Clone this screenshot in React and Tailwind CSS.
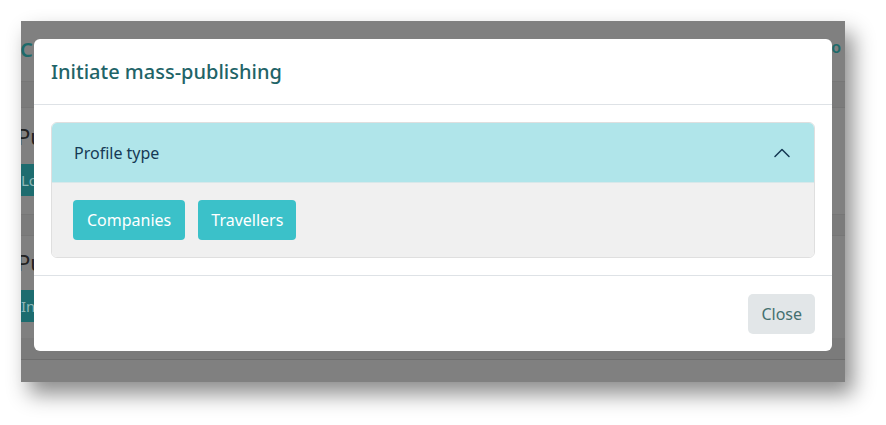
import { ChevronUp } from 'lucide-react'

const FONT = { fontFamily: '"Noto Sans", "Open Sans", sans-serif' }

function BackdropPage() {
  // page content sitting behind the overlay, already dimmed
  return (
    <div className="flex h-full flex-col">
      <div className="flex h-[60px] items-start justify-between pt-[14px] text-[20px] font-semibold text-[#1d6a6a]">
        <span className="-ml-[1px]">C</span>
        <span className="mr-[4px] text-[16px]">o</span>
      </div>
      <div className="h-[27px] border-y border-[#767676] bg-[#7b7b7b]" />
      <div className="flex flex-col gap-[14px] pt-[14px]">
        <span className="-ml-[4px] text-[22px] leading-[28px] text-[#222]">Pu</span>
        <span className="flex h-[32px] w-[20px] items-center bg-[#1d6c6f] text-[15px] text-[#8fb7b8]">Lo</span>
      </div>
      <div className="mt-[18px] h-[22px] border-y border-[#767676] bg-[#7b7b7b]" />
      <div className="flex flex-col gap-[14px] pt-[12px]">
        <span className="-ml-[4px] text-[22px] leading-[28px] text-[#222]">Pu</span>
        <span className="flex h-[32px] w-[20px] items-center bg-[#1d6c6f] text-[15px] text-[#8fb7b8]">In</span>
      </div>
      <div className="mt-[16px] h-[22px] border-b border-[#6e6e6e] bg-[#7b7b7b]" />
    </div>
  )
}

export default function App() {
  return (
    <div className="h-[425px] w-[886px] overflow-hidden bg-white pl-[21px] pt-[21px]" style={FONT}>
      <div className="relative h-[361px] w-[824px] overflow-hidden bg-[#808080] shadow-[8px_12px_20px_rgba(0,0,0,0.45)]">
        <BackdropPage />

        {/* modal */}
        <div className="absolute left-[13px] top-[18px] flex h-[312px] w-[798px] flex-col rounded-[6px] bg-white">
          <div className="flex h-[66px] shrink-0 items-center border-b border-[#dee2e6] px-[17px]">
            <h2 className="text-[20px] font-medium text-[#1f6468]">Initiate mass-publishing</h2>
          </div>

          <div className="p-[17px]">
            <div className="overflow-hidden rounded-[6px] border border-[#dfdfdf]">
              <div className="flex h-[59px] items-center justify-between bg-[#b0e5ea] pl-[22px] pr-[18px]">
                <span className="text-[16px] text-[#163a55]">Profile type</span>
                <ChevronUp size={28} strokeWidth={1.3} className="text-[#163a55]" />
              </div>
              <div className="flex gap-[13px] border-t border-[#d8e8ea] bg-[#f0f0f0] px-[21px] py-[17px]">
                <button className="h-[40px] rounded-[4px] bg-[#3bc1c9] px-[14px] text-[16px] text-white">Companies</button>
                <button className="h-[40px] rounded-[4px] bg-[#3bc1c9] px-[13px] text-[16px] text-white">Travellers</button>
              </div>
            </div>
          </div>

          <div className="mt-auto flex h-[76px] items-center justify-end border-t border-[#dee2e6] px-[17px]">
            <button className="h-[40px] rounded-[5px] bg-[#e2e6e8] px-[13px] text-[16px] text-[#44706f]">Close</button>
          </div>
        </div>
      </div>
    </div>
  )
}
